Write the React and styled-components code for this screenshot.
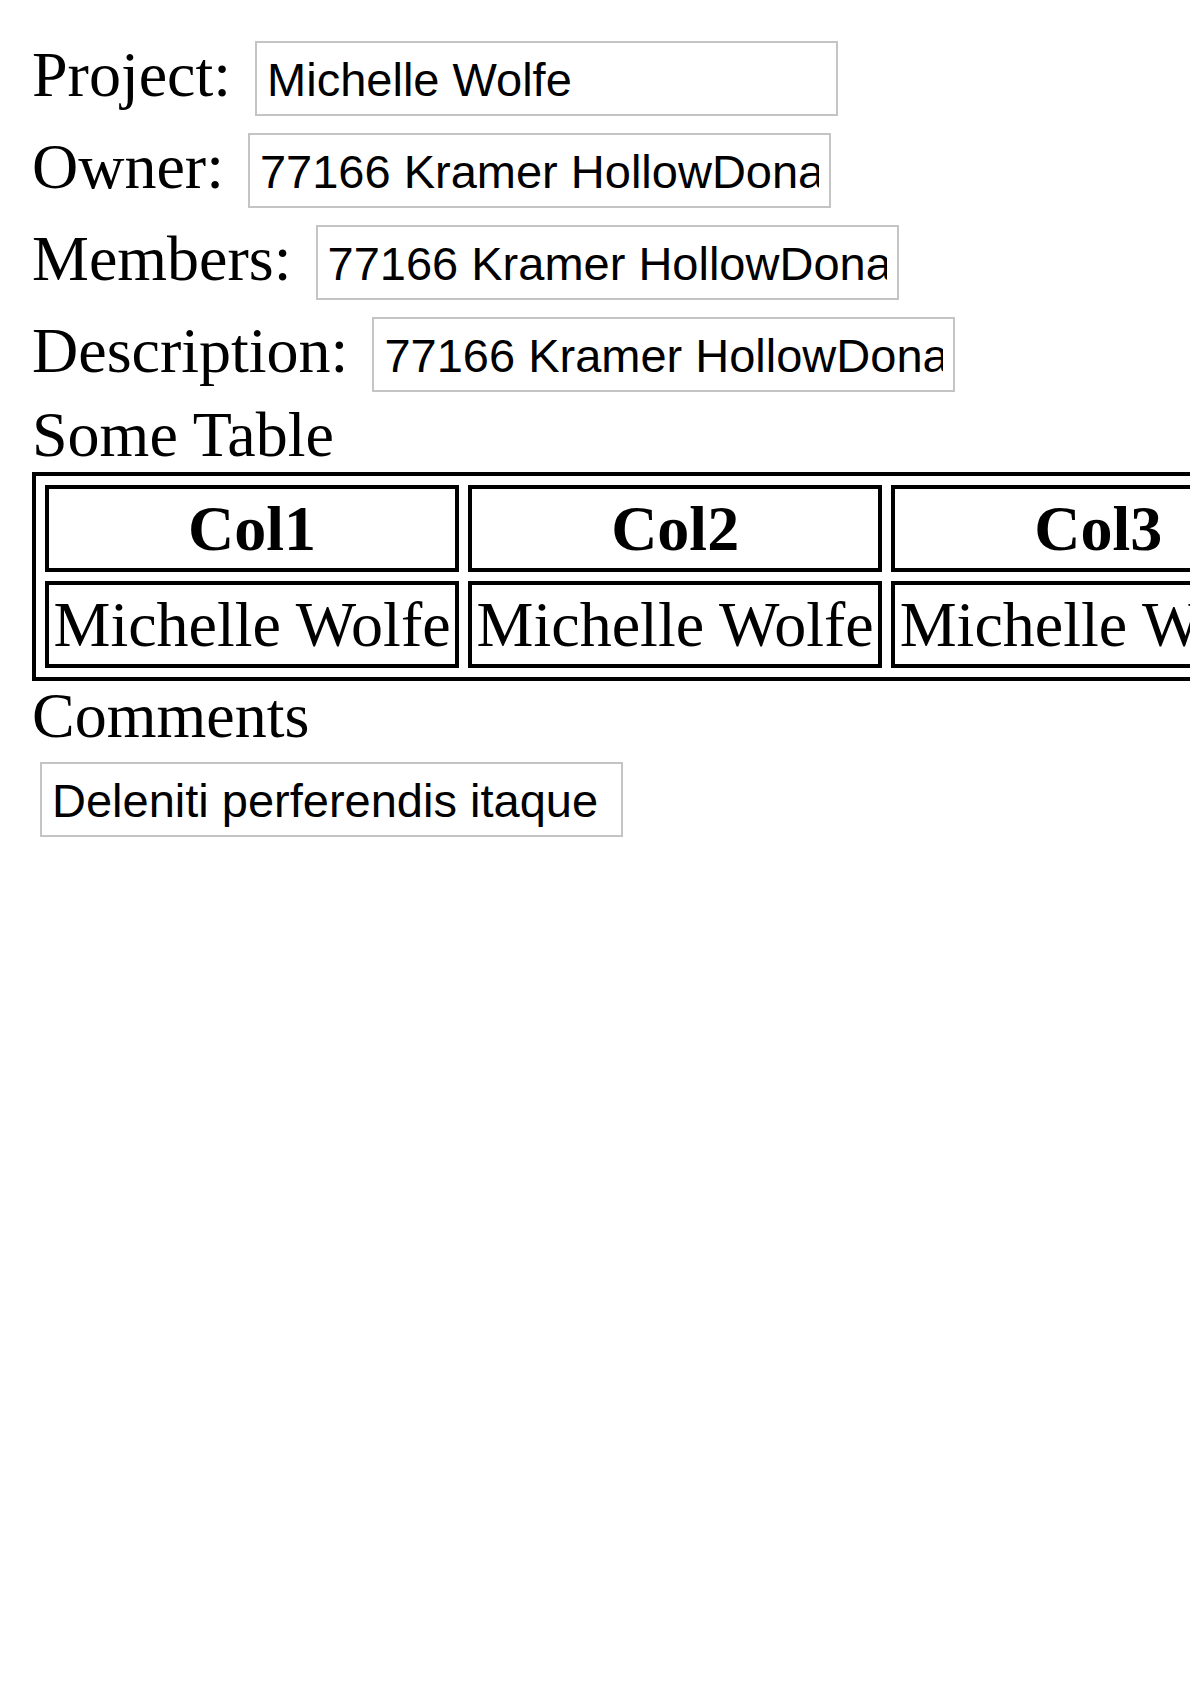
import React from 'react';
import styled, { createGlobalStyle } from 'styled-components';

const address = '77166 Kramer HollowDonald Schowalter';

const fields = [
  { label: 'Project:', value: 'Michelle Wolfe' },
  { label: 'Owner:', value: address },
  { label: 'Members:', value: address },
  { label: 'Description:', value: address },
];

const columns = ['Col1', 'Col2', 'Col3'];

export default function App() {
  return (
    <>
      <GlobalStyle />
      <Page>
        <Form>
          {fields.map((f) => (
            <Row key={f.label}>
              <Label>{f.label}</Label>
              <Field type="text" defaultValue={f.value} />
            </Row>
          ))}
        </Form>
        <Title $top={11}>Some Table</Title>
        <Table>
          <thead>
            <tr>
              {columns.map((c) => (
                <Head key={c}>{c}</Head>
              ))}
            </tr>
          </thead>
          <tbody>
            <tr>
              {columns.map((c) => (
                <Cell key={c}>Michelle Wolfe</Cell>
              ))}
            </tr>
          </tbody>
        </Table>
        <Title $top={3}>Comments</Title>
        <CommentBox type="text" defaultValue="Deleniti perferendis itaque" />
      </Page>
    </>
  );
}

const GlobalStyle = createGlobalStyle`
  html, body {
    margin: 0;
    background: #ffffff;
  }

  body {
    font-family: "Liberation Serif", "Times New Roman", serif;
    color: #000000;
  }
`;

const Page = styled.div`
  display: flex;
  flex-direction: column;
  align-items: flex-start;
  padding: 38px 0 0 32px;
`;

const Form = styled.div`
  display: flex;
  flex-direction: column;
  gap: 14px;
`;

const Row = styled.div`
  display: flex;
  align-items: baseline;
  gap: 24px;
`;

const Label = styled.span`
  font-size: 64px;
  line-height: normal;
  white-space: nowrap;
`;

const Field = styled.input`
  box-sizing: border-box;
  width: 583px;
  height: 75px;
  padding: 2px 10px 0;
  border: 2px solid #c4c4c4;
  border-radius: 0;
  background: #ffffff;
  color: #000000;
  font-family: "Liberation Sans", Arial, sans-serif;
  font-size: 47px;
  outline: none;
`;

const CommentBox = styled(Field)`
  margin: 14px 0 0 8px;
`;

const Title = styled.div`
  margin-top: ${(p) => p.$top}px;
  font-size: 64px;
  line-height: 64px;
`;

const Table = styled.table`
  margin-top: 5px;
  border: 4px solid #000000;
  border-spacing: 9px;
  font-size: 64px;
  flex-shrink: 0;
`;

const Head = styled.th`
  border: 4px solid #000000;
  padding: 2.5px 4.5px;
  font-weight: bold;
  text-align: center;
  white-space: nowrap;
`;

const Cell = styled.td`
  border: 4px solid #000000;
  padding: 2.5px 4.5px;
  white-space: nowrap;
`;
